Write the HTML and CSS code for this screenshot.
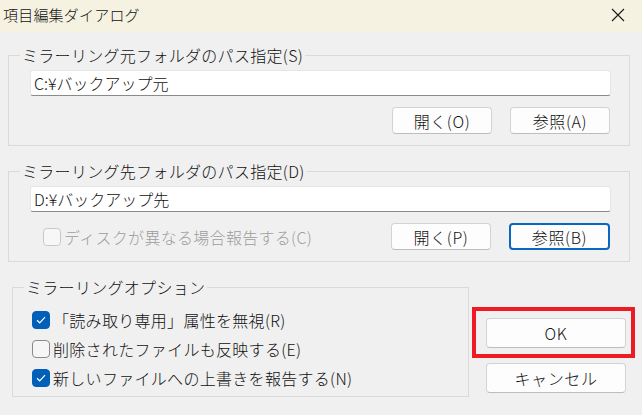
FILE: index.html
```html
<!DOCTYPE html>
<html lang="ja">
<head>
<meta charset="utf-8">
<title>項目編集ダイアログ</title>
<link rel="stylesheet" href="styles.css">
</head>
<body>
<div class="dialog">
  <div class="titlebar">
    <span class="title">項目編集ダイアログ</span>
    <svg class="close" width="14" height="14" viewBox="0 0 14 14"><path d="M1 1L13 13M13 1L1 13" stroke="#1a1a1a" stroke-width="1.1" fill="none"/></svg>
  </div>
  <div class="content">
    <fieldset class="group g1">
      <legend>ミラーリング元フォルダのパス指定(S)</legend>
      <div class="inner">
        <div class="input">C:¥バックアップ元</div>
        <div class="row">
          <button class="btn">開く(O)</button>
          <button class="btn">参照(A)</button>
        </div>
      </div>
    </fieldset>
    <fieldset class="group g2">
      <legend>ミラーリング先フォルダのパス指定(D)</legend>
      <div class="inner">
        <div class="input">D:¥バックアップ先</div>
        <div class="row">
          <label class="check disabled"><span class="box"></span><span>ディスクが異なる場合報告する(C)</span></label>
          <span class="spacer"></span>
          <button class="btn">開く(P)</button>
          <button class="btn focus">参照(B)</button>
        </div>
      </div>
    </fieldset>
    <div class="bottom">
      <fieldset class="group g3">
        <legend>ミラーリングオプション</legend>
        <div class="inner opts">
          <label class="check"><span class="box on"><svg width="10" height="8" viewBox="0 0 10 8"><path d="M1 4.2L3.7 6.8L9 1.2" stroke="#fff" stroke-width="1.2" fill="none"/></svg></span><span>「読み取り専用」属性を無視(R)</span></label>
          <label class="check"><span class="box"></span><span>削除されたファイルも反映する(E)</span></label>
          <label class="check"><span class="box on"><svg width="10" height="8" viewBox="0 0 10 8"><path d="M1 4.2L3.7 6.8L9 1.2" stroke="#fff" stroke-width="1.2" fill="none"/></svg></span><span>新しいファイルへの上書きを報告する(N)</span></label>
        </div>
      </fieldset>
      <div class="actions">
        <div class="highlight"><button class="btn wide">OK</button></div>
        <button class="btn wide cancel">キャンセル</button>
      </div>
    </div>
  </div>
</div>
</body>
</html>
```
FILE: styles.css
```css
* { box-sizing: border-box; }
html, body { margin: 0; padding: 0; }
body {
  width: 642px;
  height: 415px;
  overflow: hidden;
  background: #f0f0f0;
  font-family: "Noto Sans CJK JP", "Noto Sans", sans-serif;
  font-size: 16px;
  font-weight: 300;
  letter-spacing: 0.3px;
  color: #111;
}
.titlebar {
  height: 32px;
  background: #f6f2e1;
  display: flex;
  align-items: center;
  justify-content: space-between;
  padding: 0 17px 3px 3px;
}
.title { font-size: 15px; line-height: 20px; letter-spacing: 0.2px; }
.close { display: block; }
.content { padding: 13px 0 0 8px; }
.group {
  margin: 0;
  padding: 0;
  border: 1px solid #dadada;
  min-width: 0;
}
.g1, .g2 { margin-right: 12px; }
.group legend {
  margin-left: 11px;
  padding: 0 2px;
  line-height: 20px;
}
.g1 legend { margin-top: 2px; }
.inner { padding: 5px 18px 11px 21px; }
.g2 { margin-top: 15px; }
.input {
  height: 26px;
  background: #fff;
  border: 1px solid #e6e6e6;
  border-bottom: 1px solid #8a8a8a;
  border-radius: 3px;
  padding: 0 3px;
  line-height: 24px;
  letter-spacing: 0;
}
.row {
  margin-top: 11px;
  display: flex;
  justify-content: flex-end;
  align-items: center;
  gap: 18px;
  padding-right: 1px;
}
.spacer { flex: 1; }
.btn {
  width: 100px;
  height: 27px;
  font: inherit;
  letter-spacing: 0.6px;
  line-height: 20px;
  color: #111;
  background: #fdfdfd;
  border: 1px solid #d3d3d3;
  border-bottom-color: #bdbdbd;
  border-radius: 4px;
  padding: 0;
}
.btn.focus {
  width: 101px;
  border: 2px solid #0a66c2;
}
.check {
  display: flex;
  align-items: center;
  gap: 3px;
  line-height: 20px;
}
.check .box {
  width: 18px;
  height: 18px;
  border: 1px solid #8a8a8a;
  border-radius: 4px;
  background: #f6f6f6;
  display: flex;
  align-items: center;
  justify-content: center;
  flex: none;
}
.check .box.on {
  background: #005fb8;
  border-color: #005fb8;
}
.check.disabled { color: #9d9d9d; margin-left: 13px; }
.check.disabled .box { border-color: #c9c9c9; background: #f7f7f7; }
.bottom {
  margin-top: 15px;
  display: flex;
  align-items: flex-start;
}
.g3 { flex: none; width: 457px; margin-left: 4px; }
.opts {
  padding: 8px 10px 4px 19px;
  display: flex;
  flex-direction: column;
}
.opts .check { height: 29px; }
.actions {
  flex: none;
  margin-top: 30px;
  margin-left: 3px;
  display: flex;
  flex-direction: column;
}
.highlight {
  width: 163px;
  border: 4px solid #ed1c24;
  padding: 7px 5px 6px 10px;
}
.btn.wide { width: 140px; height: 30px; }
.cancel { margin-top: 5px; margin-left: 14px; }
```
